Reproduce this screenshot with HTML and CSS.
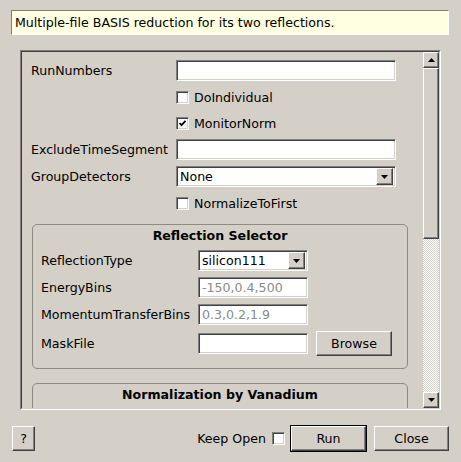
FILE: index.html
```html
<!DOCTYPE html>
<html lang="en">
  <head>
    <meta charset="UTF-8" />
    <title>BASIS reduction</title>
    <link rel="stylesheet" href="styles.css">
  </head>
  <body>
    <div class="dialog">
      <!-- Algorithm summary -->
      <div class="desc">Multiple-file BASIS reduction for its two reflections.</div>

      <!-- Property editor -->
      <div class="scroll">
        <div class="scroll-in">
          <div class="viewport">
            <div class="form">
              <span class="lbl">RunNumbers</span>
              <span class="edit sunken"></span>

              <span></span>
              <span class="check"><span class="box sunken"></span>DoIndividual</span>

              <span></span>
              <span class="check">
                <span class="box sunken">
                  <svg width="9" height="9" viewBox="0 0 9 9"><polyline points="1.5,4 3.5,6.2 7.5,1.8" fill="none" stroke="#000" stroke-width="1.8"/></svg>
                </span>MonitorNorm
              </span>

              <span class="lbl">ExcludeTimeSegment</span>
              <span class="edit sunken"></span>

              <span class="lbl">GroupDetectors</span>
              <span class="combo sunken">
                <span class="combo-text">None</span>
                <span class="arrow-btn raised"><svg width="7" height="4"><polygon points="0,0 7,0 3.5,4"/></svg></span>
              </span>

              <span></span>
              <span class="check"><span class="box sunken"></span>NormalizeToFirst</span>
            </div>

            <div class="group">
              <div class="group-title">Reflection Selector</div>
              <div class="group-form">
                <span class="lbl">ReflectionType</span>
                <span class="combo sunken">
                  <span class="combo-text">silicon111</span>
                  <span class="arrow-btn raised"><svg width="7" height="4"><polygon points="0,0 7,0 3.5,4"/></svg></span>
                </span>
                <span></span>

                <span class="lbl">EnergyBins</span>
                <span class="edit sunken grey">-150,0.4,500</span>
                <span></span>

                <span class="lbl">MomentumTransferBins</span>
                <span class="edit sunken grey">0.3,0.2,1.9</span>
                <span></span>

                <span class="lbl">MaskFile</span>
                <span class="edit sunken"></span>
                <button class="btn raised browse">Browse</button>
              </div>
            </div>

            <div class="group group-tall">
              <div class="group-title">Normalization by Vanadium</div>
            </div>
          </div>

          <div class="scrollbar">
            <span class="sb-btn raised"><svg width="7" height="4"><polygon points="3.5,0 7,4 0,4"/></svg></span>
            <span class="sb-handle raised"></span>
            <span class="sb-track"></span>
            <span class="sb-btn raised"><svg width="7" height="4"><polygon points="0,0 7,0 3.5,4"/></svg></span>
          </div>
        </div>
      </div>

      <!-- Dialog buttons -->
      <div class="buttons">
        <button class="btn raised help">?</button>
        <span class="keep">Keep Open</span>
        <span class="box sunken keep-box"></span>
        <span class="default"><button class="btn raised run">Run</button></span>
        <button class="btn raised close">Close</button>
      </div>
    </div>
  </body>
</html>
```

FILE: styles.css
```css
:root {
  --face: #d4d0c8;
  --shadow: #808080;
  --dark: #404040;
}

* {
  box-sizing: border-box;
}

body {
  margin: 0;
  background: var(--face);
  font-family: "DejaVu Sans", sans-serif;
  font-size: 12.6px;
  color: #000;
}

.dialog {
  width: 461px;
  height: 462px;
  padding-top: 10px;
  overflow: hidden;
}

/* 3d borders, old windows look */
.sunken {
  border: 1px solid;
  border-color: var(--shadow) #fff #fff var(--shadow);
  box-shadow: inset 1px 1px var(--dark), inset -1px -1px var(--face);
}

.raised {
  border: 1px solid;
  border-color: #fff var(--dark) var(--dark) #fff;
  box-shadow: inset -1px -1px var(--shadow);
  background: var(--face);
}

.desc {
  margin: 0 12px 0 11px;
  height: 25px;
  border: 1px solid;
  border-color: var(--shadow) #fff #fff var(--shadow);
  background: #ffffe1;
  padding-left: 3px;
  line-height: 23px;
  white-space: nowrap;
}

.scroll {
  margin: 15px 0 0 20px;
  width: 421px;
  height: 360px;
  border: 1px solid;
  border-color: var(--shadow) #fff #fff var(--shadow);
}

.scroll-in {
  display: flex;
  height: 100%;
  border: 1px solid;
  border-color: var(--dark) var(--face) var(--face) var(--dark);
}

.viewport {
  flex: 1;
  overflow: hidden;
  padding: 8px 0 0 9px;
}

.form {
  display: grid;
  grid-template-columns: 145px 220px;
  row-gap: 6px;
  align-items: center;
}

.lbl {
  white-space: nowrap;
}

.edit {
  display: block;
  height: 21px;
  background: #fff;
  padding-left: 3px;
  line-height: 19px;
  white-space: nowrap;
}

.grey {
  color: #8a8a8a;
}

.check {
  display: flex;
  align-items: center;
  height: 20px;
  gap: 5px;
}

.box {
  display: flex;
  align-items: center;
  justify-content: center;
  width: 13px;
  height: 13px;
  background: #fff;
}

.combo {
  display: flex;
  align-items: center;
  height: 21px;
  padding: 1px;
  background: #fff;
}

.combo-text {
  flex: 1;
  padding-left: 2px;
}

.arrow-btn {
  display: flex;
  align-items: center;
  justify-content: center;
  width: 17px;
  height: 17px;
  margin-right: 1px;
}

.group {
  margin: 11px 0 0 1px;
  width: 376px;
  border: 1px solid #8e8b85;
  border-radius: 5px;
  padding: 3px 0 12px 8px;
}

.group + .group {
  margin-top: 14px;
}

.group-tall {
  height: 200px;
}

.group-title {
  font-weight: bold;
  text-align: center;
  line-height: 16px;
  padding-right: 8px;
}

.group-form {
  display: grid;
  grid-template-columns: 157px 110px auto;
  grid-template-rows: 21px 21px 21px 25px;
  row-gap: 6px;
  align-items: center;
  margin-top: 6px;
}

.btn {
  font-family: inherit;
  font-size: 12.6px;
  color: #000;
  padding: 0;
  cursor: pointer;
}

.browse {
  width: 76px;
  height: 25px;
  margin-left: 8px;
}

/* scrollbar */
.scrollbar {
  width: 16px;
  display: flex;
  flex-direction: column;
}

.sb-btn {
  display: flex;
  align-items: center;
  justify-content: center;
  height: 16px;
  flex: none;
}

.sb-handle {
  height: 171px;
  flex: none;
}

.sb-track {
  flex: 1;
  background: repeating-conic-gradient(#fff 0 25%, var(--face) 0 50%) 0 0 / 2px 2px;
}

/* bottom row */
.buttons {
  display: flex;
  align-items: center;
  margin-top: 15px;
  padding: 0 12px;
  height: 27px;
}

.help {
  width: 23px;
  height: 25px;
}

.keep {
  margin-left: auto;
  margin-right: 6px;
}

.default {
  margin-left: 5px;
  border: 1px solid #000;
  display: flex;
}

.run {
  width: 75px;
  height: 25px;
}

.close {
  width: 75px;
  height: 25px;
  margin-left: 7px;
}
```
